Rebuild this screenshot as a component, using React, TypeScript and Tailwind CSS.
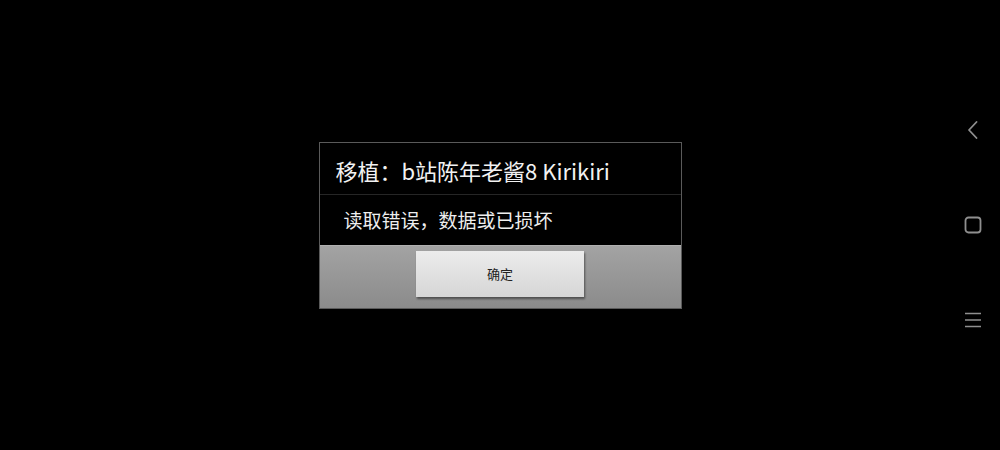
export default function App() {
  return (
    <div className="relative h-[450px] w-[1000px] overflow-hidden bg-black font-['Noto_Sans_CJK_SC',sans-serif]">
      {/* dialog, centered on screen */}
      <div className="flex h-full w-full items-center justify-center">
        <div className="flex w-[363px] flex-col border border-[#5a5a5a] bg-black">
          <div className="flex h-[52px] items-center border-b border-[#262626] pl-4 pt-1 text-[22px] leading-none text-[#f2f2f2]">
            移植：b站陈年老酱8 Kirikiri
          </div>
          <div className="flex h-[50px] items-center pl-6 text-[19px] leading-none text-[#eeeeee]">
            读取错误，数据或已损坏
          </div>
          <div className="flex h-[63px] justify-center border-t border-[#b0b0b0] bg-gradient-to-b from-[#a3a3a3] to-[#8b8b8b] pt-[5px]">
            <button className="flex h-[46px] w-[168px] items-center justify-center bg-gradient-to-b from-[#ececec] to-[#d6d6d6] text-[13px] text-[#222] shadow-[1px_2px_2px_rgba(0,0,0,0.45)]">
              确定
            </button>
          </div>
        </div>
      </div>

      {/* system nav bar */}
      <div className="absolute right-[18px] top-0 flex h-full flex-col items-center justify-center gap-[77px] text-[#8f8f8f]">
        <svg width="18" height="18" viewBox="0 0 18 18" fill="none" stroke="currentColor" strokeWidth="1.8" strokeLinecap="round" strokeLinejoin="round">
          <path d="M12.5 1 L5 9 L12.5 17" />
        </svg>
        <svg width="18" height="18" viewBox="0 0 18 18" fill="none" stroke="currentColor" strokeWidth="1.8">
          <rect x="1.5" y="1.5" width="15" height="15" rx="3" />
        </svg>
        <svg width="18" height="18" viewBox="0 0 18 18" fill="none" stroke="currentColor" strokeWidth="1.6">
          <path d="M1 2.5 H17 M1 9 H17 M1 15.5 H17" />
        </svg>
      </div>
    </div>
  );
}
